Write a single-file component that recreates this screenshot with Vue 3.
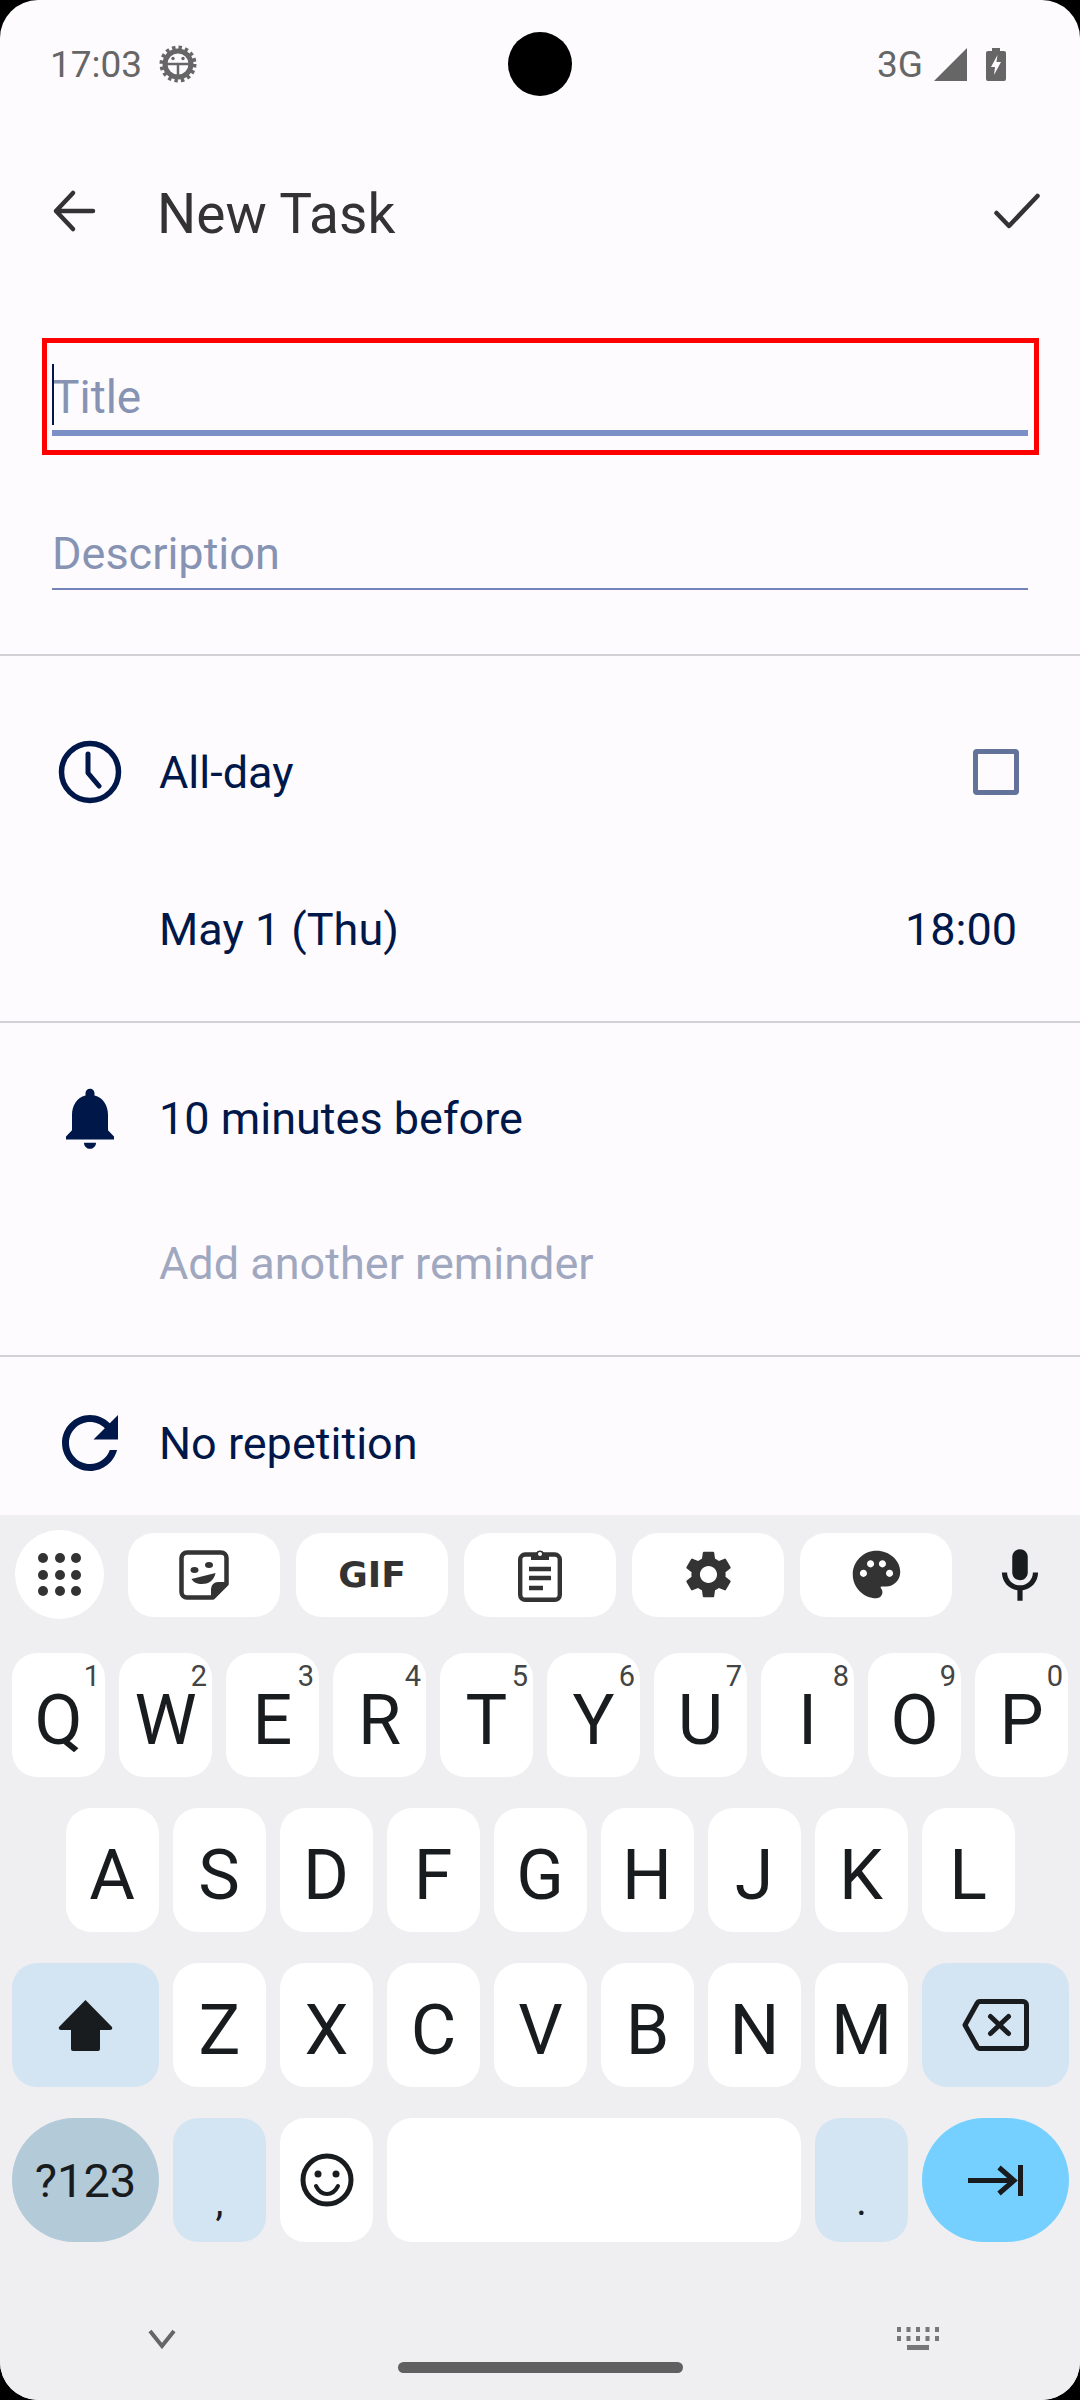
<template>
  <div class="phone">
    <!-- status bar -->
    <div class="status-bar">
      <div class="status-left">
        <span class="clock">17:03</span>
        <svg class="debug-icon" viewBox="0 0 38 38">
          <circle cx="19" cy="19" r="13" fill="none" stroke="#666" stroke-width="5" />
          <circle cx="19" cy="19" r="16.500" fill="none" stroke="#666" stroke-width="4" stroke-dasharray="3.400 3.080" />
          <path d="M6 19h26M19 19v13" stroke="#666" stroke-width="2.500" fill="none" />
          <circle cx="14" cy="13.500" r="1.700" fill="#666" />
          <circle cx="24" cy="13.500" r="1.700" fill="#666" />
        </svg>
      </div>
      <div class="status-right">
        <span class="net">3G</span>
        <svg class="signal" viewBox="0 0 33 33"><path d="M33 0v33H0z" fill="#666" /></svg>
        <svg class="battery" viewBox="0 0 20 33">
          <path d="M6 0h8v3h4a2 2 0 0 1 2 2v26a2 2 0 0 1-2 2H2a2 2 0 0 1-2-2V5a2 2 0 0 1 2-2h4z" fill="#666" />
          <path d="M11.500 7 5 19h4l-1 8 7-13h-4.500z" fill="#fefbff" />
        </svg>
      </div>
      <div class="camera"></div>
    </div>

    <!-- app bar -->
    <header class="app-bar">
      <svg class="back" viewBox="0 0 44 44">
        <path d="M4 22h37M21 4 4 22l17 18" fill="none" stroke="#333" stroke-width="4.500" stroke-linecap="round" stroke-linejoin="round" />
      </svg>
      <h1 class="title">New Task</h1>
      <svg class="done" viewBox="0 0 46 36">
        <path d="M2.500 20 15 33 43.500 3" fill="none" stroke="#333" stroke-width="4.500" stroke-linecap="round" stroke-linejoin="round" />
      </svg>
    </header>

    <main class="content">
      <div class="fields">
        <div class="title-box">
          <div class="field active">
            <span class="caret"></span>
            <span class="placeholder">Title</span>
          </div>
        </div>
        <div class="field desc">
          <span class="placeholder">Description</span>
        </div>
      </div>

      <section class="group group-date">
        <div class="row row-allday">
          <svg class="row-icon" viewBox="0 0 74 74">
            <circle cx="37" cy="37" r="28.500" fill="none" stroke="#001849" stroke-width="5.500" />
            <path d="M35 19v19l11 13" fill="none" stroke="#001849" stroke-width="5" stroke-linecap="round" stroke-linejoin="round" />
          </svg>
          <span class="row-text">All-day</span>
          <span class="checkbox"></span>
        </div>
        <div class="row row-when">
          <span class="row-text">May 1 (Thu)</span>
          <span class="row-time">18:00</span>
        </div>
      </section>

      <section class="group group-remind">
        <div class="row row-bell">
          <svg class="row-icon" viewBox="0 0 24 24" preserveAspectRatio="none">
            <path fill="#001849" d="M12 22c1.100 0 2-.9 2-2h-4c0 1.100.9 2 2 2zm6-6v-5c0-3.070-1.630-5.640-4.500-6.320V4c0-.83-.67-1.500-1.500-1.500s-1.500.67-1.500 1.500v.68C7.640 5.360 6 7.920 6 11v5l-2 2v1h16v-1l-2-2z" />
          </svg>
          <span class="row-text">10 minutes before</span>
        </div>
        <div class="row row-add">
          <span class="row-text muted">Add another reminder</span>
        </div>
      </section>

      <section class="group group-repeat">
        <div class="row row-repeat">
          <svg class="row-icon" viewBox="0 0 24 24">
            <path fill="#001849" d="M17.650 6.350C16.200 4.900 14.210 4 12 4c-4.420 0-7.990 3.580-7.990 8s3.570 8 7.990 8c3.730 0 6.840-2.550 7.730-6h-2.080c-.82 2.330-3.040 4-5.650 4-3.310 0-6-2.690-6-6s2.690-6 6-6c1.660 0 3.140.69 4.220 1.780L13 11h7V4l-2.350 2.350z" />
          </svg>
          <span class="row-text">No repetition</span>
        </div>
      </section>
    </main>

    <!-- keyboard -->
    <div class="keyboard">
      <div class="kb-tools">
        <div class="tool-round">
          <svg class="ic-apps" viewBox="0 0 44 44">
            <g fill="#333">
              <template v-for="y in [5, 22, 38]" :key="y">
                <circle v-for="x in [5, 22, 38]" :key="x" :cx="x" :cy="y" r="5" />
              </template>
            </g>
          </svg>
        </div>
        <div class="tool">
          <svg class="ic-sticker" viewBox="0 0 50 50">
            <path d="M8 2.500h34a5.500 5.500 0 0 1 5.500 5.500v26L34 47.500H8A5.500 5.500 0 0 1 2.500 42V8A5.500 5.500 0 0 1 8 2.500z" fill="none" stroke="#333" stroke-width="4.500" stroke-linejoin="round" />
            <path d="M47.500 32H39a7 7 0 0 0-7 7v8.500h3z" fill="#333" />
            <ellipse cx="15.500" cy="20" rx="4" ry="3" fill="#333" />
            <ellipse cx="30" cy="15" rx="4" ry="3" fill="#333" />
            <path d="M12.500 29 36.500 23C35 31 29 34 23 34 18 34 14 32 12.500 29z" fill="#333" />
          </svg>
        </div>
        <div class="tool"><span class="gif">GIF</span></div>
        <div class="tool">
          <svg class="ic-clip" viewBox="0 0 44 54">
            <rect x="2.200" y="6.500" width="39.600" height="45.300" rx="5" fill="none" stroke="#333" stroke-width="4.400" />
            <path d="M13 5h5a4.500 4.500 0 0 1 8 0h5v7H13z" fill="#333" />
            <circle cx="22" cy="6" r="2" fill="#fff" />
            <path d="M11 21h22M11 30h22M11 40h14" stroke="#333" stroke-width="4.500" fill="none" />
          </svg>
        </div>
        <div class="tool">
          <svg class="ic-gear" viewBox="0 0 24 24">
            <path fill="#333" d="M19.140 12.940c.04-.3.06-.61.06-.94 0-.32-.02-.64-.07-.94l2.030-1.580c.18-.14.23-.41.12-.61l-1.920-3.320c-.12-.22-.37-.29-.59-.22l-2.390.96c-.5-.38-1.030-.7-1.620-.94l-.36-2.540c-.04-.24-.24-.41-.48-.41h-3.840c-.24 0-.43.17-.47.41l-.36 2.540c-.59.24-1.130.57-1.620.94l-2.390-.96c-.22-.08-.47 0-.59.22L2.740 8.870c-.12.21-.08.47.12.61l2.030 1.580c-.05.3-.09.63-.09.94s.02.64.07.94l-2.030 1.580c-.18.14-.23.41-.12.61l1.920 3.320c.12.22.37.29.59.22l2.390-.96c.5.38 1.030.7 1.620.94l.36 2.540c.05.24.24.41.48.41h3.840c.24 0 .44-.17.47-.41l.36-2.540c.59-.24 1.130-.56 1.620-.94l2.390.96c.22.08.47 0 .59-.22l1.920-3.320c.12-.22.07-.47-.12-.61l-2.010-1.580zM12 15.600c-1.980 0-3.600-1.620-3.600-3.600s1.620-3.600 3.600-3.600 3.600 1.620 3.600 3.600-1.620 3.600-3.600 3.600z" />
          </svg>
        </div>
        <div class="tool">
          <svg class="ic-palette" viewBox="0 0 24 24">
            <path fill="#333" d="M12 2C6.490 2 2 6.490 2 12s4.490 10 10 10c1.380 0 2.500-1.120 2.500-2.500 0-.61-.23-1.200-.64-1.670-.08-.1-.13-.21-.13-.33 0-.28.22-.5.5-.5H16c3.310 0 6-2.690 6-6 0-4.960-4.490-9-10-9zm5.500 11c-.83 0-1.500-.67-1.500-1.500s.67-1.500 1.500-1.500 1.500.67 1.500 1.500-.67 1.500-1.500 1.500zm-3-4c-.83 0-1.500-.67-1.500-1.500S13.670 6 14.500 6s1.500.67 1.500 1.500S15.330 9 14.500 9zM5 11.500c0-.83.67-1.500 1.500-1.500s1.500.67 1.500 1.500S7.330 13 6.500 13 5 12.330 5 11.500zm6-4c0 .83-.67 1.500-1.500 1.500S8 8.330 8 7.500 8.670 6 9.500 6s1.500.67 1.500 1.500z" />
          </svg>
        </div>
        <svg class="ic-mic" viewBox="0 0 24 24">
          <path fill="#191c1e" d="M12 14c1.660 0 3-1.340 3-3V5c0-1.660-1.340-3-3-3S9 3.340 9 5v6c0 1.660 1.340 3 3 3z" />
          <path fill="#191c1e" d="M17 11c0 2.760-2.240 5-5 5s-5-2.240-5-5H5c0 3.530 2.610 6.430 6 6.920V22h2v-4.080c3.390-.49 6-3.390 6-6.920h-2z" />
        </svg>
      </div>

      <div class="kb-row">
        <div v-for="(k, i) in row1" :key="k" class="key">
          {{ k }}<sup class="hint">{{ (i + 1) % 10 }}</sup>
        </div>
      </div>
      <div class="kb-row center">
        <div v-for="k in row2" :key="k" class="key">{{ k }}</div>
      </div>
      <div class="kb-row">
        <div class="key wide func">
          <svg class="ic-shift" viewBox="0 0 55 52">
            <path d="M27.500 1 1 28q-1 3 2 3h10v19q0 2 2 2h25q2 0 2-2V31h10q3 0 2-3z" fill="#191c1e" />
          </svg>
        </div>
        <div v-for="k in row3" :key="k" class="key">{{ k }}</div>
        <div class="key wide func">
          <svg class="ic-backspace" viewBox="0 0 67 52">
            <path d="M18 2.500h43a3.500 3.500 0 0 1 3.500 3.500v40a3.500 3.500 0 0 1-3.500 3.500H18q-2 0-3-2L3 26 15 4.500q1-2 3-2z" fill="none" stroke="#191c1e" stroke-width="5" stroke-linejoin="round" />
            <path d="M28.500 17.500l18 17M46.500 17.500l-18 17" fill="none" stroke="#191c1e" stroke-width="5" stroke-linecap="round" />
          </svg>
        </div>
      </div>
      <div class="kb-row">
        <div class="key wide symbols">?123</div>
        <div class="key func punct">,</div>
        <div class="key emoji">
          <svg class="ic-emoji" viewBox="0 0 54 54">
            <circle cx="27" cy="27" r="24" fill="none" stroke="#191c1e" stroke-width="5" />
            <circle cx="18" cy="21" r="3.500" fill="#191c1e" />
            <circle cx="36" cy="21" r="3.500" fill="#191c1e" />
            <path d="M16 33c3 6 7 8 11 8s8-2 11-8" fill="none" stroke="#191c1e" stroke-width="4" stroke-linecap="round" />
          </svg>
        </div>
        <div class="key space"></div>
        <div class="key func punct">.</div>
        <div class="key wide enter">
          <svg class="ic-enter" viewBox="0 0 55 31">
            <path d="M0 15.500h47M31 2.500l15 13-15 13" fill="none" stroke="#191c1e" stroke-width="5" />
            <path d="M52.500 0v31" stroke="#191c1e" stroke-width="5" />
          </svg>
        </div>
      </div>

      <div class="kb-nav">
        <svg class="ic-down" viewBox="0 0 28 20">
          <path d="M2 2 14 17 26 2" fill="none" stroke="#666" stroke-width="4" />
        </svg>
        <svg class="ic-kbd" viewBox="0 0 42 24">
          <g fill="#777">
            <template v-for="y in [0, 9]" :key="y">
              <rect v-for="x in [0, 9.500, 19, 28.500, 38]" :key="x" :x="x" :y="y" width="4" height="5" />
            </template>
            <rect x="10" y="18" width="22" height="5" />
          </g>
        </svg>
      </div>
      <div class="home-pill"></div>
    </div>
  </div>
</template>

<script setup>
const row1 = ['Q', 'W', 'E', 'R', 'T', 'Y', 'U', 'I', 'O', 'P']
const row2 = ['A', 'S', 'D', 'F', 'G', 'H', 'J', 'K', 'L']
const row3 = ['Z', 'X', 'C', 'V', 'B', 'N', 'M']
</script>

<style>
html, body { margin: 0; background: #000; }
</style>

<style scoped>
.phone {
  position: relative;
  width: 1080px;
  height: 2400px;
  display: flex;
  flex-direction: column;
  overflow: hidden;
  border-radius: 38px;
  background: #fefbff;
  font-family: Roboto, "Noto Sans", sans-serif;
  color: #001849;
}

.status-bar {
  position: relative;
  flex: none;
  height: 128px;
  display: flex;
  align-items: center;
  justify-content: space-between;
  padding: 0 74px 0 50px;
  color: #666;
}
.status-left, .status-right { display: flex; align-items: center; }
.clock { font-size: 37px; }
.debug-icon { width: 38px; height: 38px; margin-left: 17px; }
.net { font-size: 37px; }
.signal { width: 33px; height: 33px; margin-left: 11px; }
.battery { width: 20px; height: 33px; margin-left: 19px; }
.camera {
  position: absolute;
  left: 508px;
  top: 32px;
  width: 64px;
  height: 64px;
  border-radius: 50%;
  background: #000;
}

.app-bar {
  flex: none;
  height: 170px;
  display: flex;
  align-items: center;
  padding: 0 40px 0 52px;
}
.back { width: 44px; height: 44px; margin-bottom: 4px; }
.title {
  flex: 1;
  margin: 2px 0 0 61px;
  font-size: 55px;
  font-weight: 400;
  color: #333;
}
.done { width: 46px; height: 36px; margin-bottom: 4px; }

.content { flex: 1; min-height: 0; overflow: hidden; }

.fields { padding: 40px 42px 0; }
.title-box {
  border: 5px solid #f00;
  height: 117px;
  box-sizing: border-box;
  padding: 0 6px 0 5px;
  margin-right: -1px;
}
.field {
  position: relative;
  display: flex;
  align-items: flex-end;
  box-sizing: border-box;
  font-size: 46px;
  color: #8793b3;
}
.field.active {
  height: 93px;
  border-bottom: 6px solid #7c90c8;
  padding-bottom: 8px;
}
.field.desc {
  height: 91px;
  margin: 44px 10px 0;
  border-bottom: 2px solid #7484b8;
  padding-bottom: 9px;
  font-size: 45px;
}
.placeholder { line-height: 50px; }
.caret {
  position: absolute;
  left: 0;
  top: 21px;
  width: 2px;
  height: 61px;
  background: #001849;
}

.group { border-top: 2px solid #d2d1d6; box-sizing: border-box; }
.group-date { height: 367px; margin-top: 64px; padding-top: 38px; }
.group-remind { height: 334px; }

.row { display: flex; align-items: center; font-size: 45px; padding-left: 159px; position: relative; }
.row-icon { position: absolute; left: 53px; top: 50%; width: 74px; height: 74px; margin-top: -37px; }
.row-text { flex: 1; }
.muted { color: #a0a8bf; }
.row-allday { height: 156px; padding-right: 61px; }
.row-when { height: 158px; padding-right: 63px; }
.row-bell { height: 190px; }
.row-bell .row-icon { left: 54px; width: 72px; }
.row-add { height: 100px; }
.row-repeat { height: 172px; }
.row-repeat .row-icon { width: 84px; height: 84px; left: 48px; margin-top: -42px; }
.checkbox {
  width: 46px;
  height: 46px;
  box-sizing: border-box;
  border: 5px solid #62729b;
  border-radius: 4px;
}

.keyboard {
  flex: none;
  height: 885px;
  box-sizing: border-box;
  position: relative;
  background: #efeff2;
  padding: 15px 12px 0;
  color: #191c1e;
  display: flex;
  flex-direction: column;
}

.kb-tools { display: flex; align-items: center; height: 89px; padding-left: 3px; margin-bottom: 34px; }
.tool-round {
  width: 89px;
  height: 89px;
  margin-right: 24px;
  border-radius: 50%;
  background: #fff;
  display: flex;
  align-items: center;
  justify-content: center;
}
.tool {
  width: 152px;
  height: 84px;
  margin-right: 16px;
  border-radius: 26px;
  background: #fff;
  display: flex;
  align-items: center;
  justify-content: center;
}
.ic-apps { width: 44px; height: 44px; }
.ic-sticker { width: 50px; height: 50px; }
.ic-clip { width: 44px; height: 54px; }
.ic-gear { width: 57px; height: 57px; }
.ic-palette { width: 57px; height: 57px; }
.ic-mic { width: 62px; height: 62px; margin-left: 21px; }
.gif { font-family: "DejaVu Sans", sans-serif; font-weight: 700; font-size: 36px; color: #333; }

.kb-row { display: flex; gap: 14px; height: 124px; margin-bottom: 31px; }
.kb-row.center { justify-content: center; }
.key {
  position: relative;
  width: 93px;
  height: 124px;
  flex: none;
  border-radius: 25px;
  background: #fff;
  display: flex;
  align-items: center;
  justify-content: center;
  font-size: 70px;
  line-height: 1;
  padding-top: 10px;
  box-sizing: border-box;
}
.hint {
  position: absolute;
  top: 5px;
  right: 5px;
  font-size: 29px;
  line-height: 36px;
  color: #444;
  vertical-align: baseline;
}
.key.wide { width: 147px; padding-top: 0; }
.key.func { background: #d3e4f3; padding-top: 0; }
.key.emoji { padding: 0; }
.symbols {
  background: #b3cad8;
  border-radius: 63px;
  font-size: 47px;
}
.enter { background: #75cfff; border-radius: 63px; }
.key.punct { font-size: 40px; align-items: flex-end; padding-bottom: 20px; }
.key.space { width: 414px; padding: 0; }

.ic-shift { width: 55px; height: 52px; }
.ic-backspace { width: 67px; height: 52px; }
.ic-emoji { width: 54px; height: 54px; }
.ic-enter { width: 55px; height: 31px; }

.kb-nav {
  position: absolute;
  left: 148px;
  right: 141px;
  top: 812px;
  display: flex;
  align-items: center;
  justify-content: space-between;
  height: 24px;
}
.ic-down { width: 28px; height: 20px; }
.ic-kbd { width: 42px; height: 24px; }
.home-pill {
  position: absolute;
  left: 398px;
  top: 847px;
  width: 285px;
  height: 11px;
  border-radius: 6px;
  background: #606060;
}
</style>
